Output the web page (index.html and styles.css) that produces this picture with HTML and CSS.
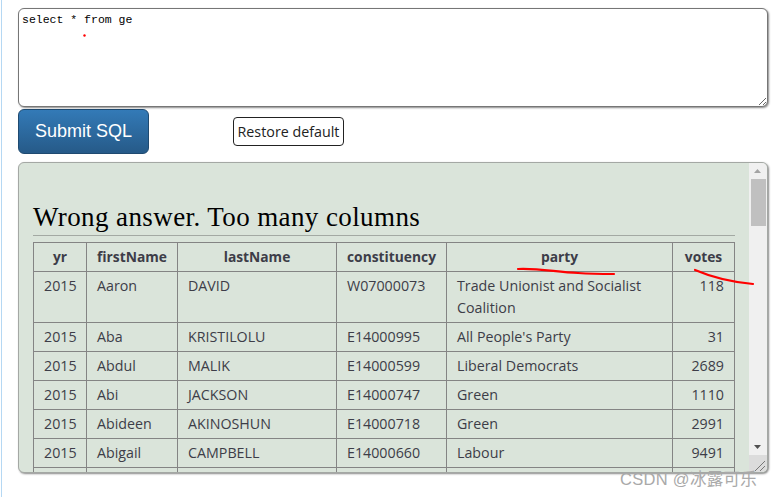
FILE: index.html
```html
<!DOCTYPE html>
<html lang="en">
<head>
<meta charset="utf-8">
<title>SQL quiz</title>
<link rel="stylesheet" href="styles.css">
</head>
<body>
<main class="page">
  <textarea class="sql" spellcheck="false">select * from ge</textarea>
  <div class="actions">
    <button class="submit" type="button">Submit SQL</button>
    <button class="restore" type="button">Restore default</button>
  </div>
  <section class="result">
    <div class="result-body">
      <h2 class="verdict">Wrong answer. Too many columns</h2>
      <table class="grid">
        <colgroup>
          <col class="c-yr"><col class="c-first"><col class="c-last"><col class="c-cons"><col class="c-party"><col class="c-votes">
        </colgroup>
        <thead>
          <tr><th>yr</th><th>firstName</th><th>lastName</th><th>constituency</th><th>party</th><th>votes</th></tr>
        </thead>
        <tbody>
          <tr><td class="num">2015</td><td>Aaron</td><td>DAVID</td><td>W07000073</td><td>Trade Unionist and Socialist Coalition</td><td class="num">118</td></tr>
          <tr><td class="num">2015</td><td>Aba</td><td>KRISTILOLU</td><td>E14000995</td><td>All People's Party</td><td class="num">31</td></tr>
          <tr><td class="num">2015</td><td>Abdul</td><td>MALIK</td><td>E14000599</td><td>Liberal Democrats</td><td class="num">2689</td></tr>
          <tr><td class="num">2015</td><td>Abi</td><td>JACKSON</td><td>E14000747</td><td>Green</td><td class="num">1110</td></tr>
          <tr><td class="num">2015</td><td>Abideen</td><td>AKINOSHUN</td><td>E14000718</td><td>Green</td><td class="num">2991</td></tr>
          <tr><td class="num">2015</td><td>Abigail</td><td>CAMPBELL</td><td>E14000660</td><td>Labour</td><td class="num">9491</td></tr>
          <tr><td class="num">&nbsp;</td><td></td><td></td><td></td><td></td><td></td></tr>
        </tbody>
      </table>
    </div>
    <div class="scrollbar" aria-hidden="true">
      <svg class="arrow" width="17" height="16" viewBox="0 0 17 16"><path d="M5 10h7L8.500 6z" fill="#a3a3a3"/></svg>
      <div class="track"><div class="thumb"></div></div>
      <svg class="arrow" width="17" height="16" viewBox="0 0 17 16"><path d="M5 6h7L8.500 10z" fill="#505050"/></svg>
      <div class="corner">
        <svg width="17" height="17" viewBox="0 0 17 17"><path d="M6 16L16 6M11 16L16 11" stroke="#777" stroke-width="1" fill="none"/></svg>
      </div>
    </div>
  </section>
</main>
<svg class="ink" width="772" height="497" viewBox="0 0 772 497" aria-hidden="true">
  <circle cx="84.500" cy="35.500" r="1.200" fill="#f00"/>
  <path d="M518 269c20-1 38 3 60 4 14 1 26 1 36 1" fill="none" stroke="#f00" stroke-width="2.200" stroke-linecap="round"/>
  <path d="M695 270c14 6 36 12 58 14" fill="none" stroke="#f00" stroke-width="2.200" stroke-linecap="round"/>
</svg>
<div class="mark">CSDN @冰露可乐</div>
</body>
</html>
```
FILE: styles.css
```css
* { box-sizing: border-box; }
html, body { margin: 0; height: 100%; background: #fff; overflow: hidden; }
body { position: relative; }
.page {
  width: 772px;
  height: 497px;
  padding: 8px 4px 0 18px;
  display: flex;
  flex-direction: column;
  background: linear-gradient(90deg, #fff 1px, #b5d8f3 1px, #b5d8f3 2px, #fff 2px);
}
.sql {
  display: block;
  width: 750px;
  height: 99px;
  margin: 0;
  padding: 4px 3px;
  font: 11.500px/13px "Liberation Mono", monospace;
  color: #000;
  background: #fff;
  border: 1px solid #767676;
  border-radius: 6px;
  box-shadow: 1px 1px 2px #8a8a8a;
  outline: 0;
  resize: vertical;
}
.actions {
  display: flex;
  align-items: center;
  margin-top: 2px;
  height: 45px;
}
.submit {
  width: 131px;
  height: 45px;
  padding: 0;
  color: #fff;
  font: 18px "Liberation Sans", Arial, sans-serif;
  background: linear-gradient(#337ab7, #265a88);
  border: 1px solid #1f4a70;
  border-radius: 6px;
}
.restore {
  width: 111px;
  height: 29px;
  margin-left: 84px;
  padding: 0;
  color: #222;
  font: 14.300px "Open Sans", sans-serif;
  background: #fff;
  border: 1px solid #222;
  border-radius: 4px;
}
.result {
  display: flex;
  width: 750px;
  height: 311px;
  margin-top: 8px;
  background: #dae4da;
  border: 1px solid #a4a8a4;
  border-radius: 6px;
  box-shadow: 1px 1px 2px #8a8a8a;
  overflow: hidden;
}
.result-body {
  flex: 1;
  min-width: 0;
  padding: 0 14px;
  overflow: hidden;
}
.verdict {
  margin: 39px 0 6px;
  padding-bottom: 3px;
  height: 34px;
  font: 400 27px/31px "Liberation Serif", serif;
  letter-spacing: 0.400px;
  color: #000;
  border-bottom: 1px solid #a3a9a3;
}
.grid {
  width: 701px;
  table-layout: fixed;
  border-collapse: collapse;
  font: 14.250px/22px "Open Sans", sans-serif;
  color: #3d3d48;
}
.c-yr { width: 53px; }
.c-first { width: 91px; }
.c-last { width: 159px; }
.c-cons { width: 110px; }
.c-party { width: 226px; }
.c-votes { width: 62px; }
.grid th, .grid td {
  border: 1px solid #848484;
  padding: 3px 10px 3px;
  vertical-align: top;
  text-align: left;
}
.grid th { font-size: 13.800px; font-weight: 700; text-align: center; }
.grid td.num { text-align: right; }
.scrollbar {
  flex: none;
  width: 18px;
  display: flex;
  flex-direction: column;
  background: #f0f0f0;
}
.arrow { display: block; flex: none; }
.track { flex: 1; padding: 0 1px; }
.thumb { width: 15px; height: 47px; margin: 0 auto; background: #c0c0c0; }
.corner { flex: none; height: 17px; background: #dcdcdc; }
.corner svg { display: block; }
.ink { position: absolute; left: 0; top: 0; pointer-events: none; }
.mark {
  position: absolute;
  left: 620px;
  top: 468px;
  font: 16.500px/22px "Liberation Sans", "Noto Sans CJK SC", sans-serif;
  color: #a9a9a9;
  letter-spacing: 0.300px;
}
```
